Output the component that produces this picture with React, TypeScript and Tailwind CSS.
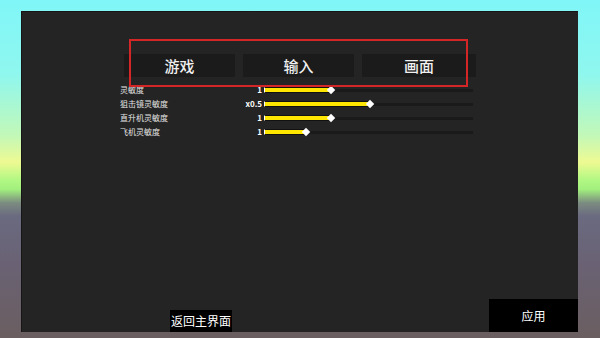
const tabs = [
  { label: '游戏', w: 'w-[111px]' },
  { label: '输入', w: 'w-[111px]' },
  { label: '画面', w: 'w-[114px]' },
]

const sliders = [
  { label: '灵敏度', value: '1', fill: 67 },
  { label: '狙击镜灵敏度', value: 'x0.5', fill: 106 },
  { label: '直升机灵敏度', value: '1', fill: 67 },
  { label: '飞机灵敏度', value: '1', fill: 42 },
]

const font = "font-['Noto_Sans_CJK_SC','Noto_Sans',sans-serif]"

export default function App() {
  return (
    <div
      className={`relative w-[600px] h-[338px] overflow-hidden pt-[11px] pl-[21px] ${font} bg-[linear-gradient(to_bottom,#80f6f8_0%,#8ff7ee_22%,#c2f8b8_40%,#eefa92_48%,#b4f884_53%,#a2f07e_56%,#7c8c80_60%,#6a6a80_64%,#6a6274_78%,#6a5e60_100%)]`}
    >
      {/* Panel */}
      <div className="w-[557px] h-[321px] bg-[#242424] border-l border-t border-[#161616] flex flex-col">
        {/* Tabs */}
        <div className="flex gap-[8px] ml-[102px] mt-[42px]">
          {tabs.map(t => (
            <div
              key={t.label}
              className={`${t.w} h-[23px] bg-[#1b1b1b] flex items-center justify-center text-[15px] font-medium text-[#f0f0f0] leading-none`}
            >
              {t.label}
            </div>
          ))}
        </div>

        {/* Sliders */}
        <div className="flex flex-col mt-[6px] ml-[98px]">
          {sliders.map(s => (
            <div key={s.label} className="flex items-center h-[14px]">
              <span className="w-[110px] text-[8px] text-[#e4e4e4] leading-none">{s.label}</span>
              <span className="w-[33px] text-right text-[8px] font-bold text-white leading-none pr-[1px]">{s.value}</span>
              <div className="relative w-[209px] h-[3px] bg-[#1a1a1a] ml-[1px] flex items-center">
                <div
                  className="h-[6px] bg-[#ffe600] border border-[#111] border-l-white"
                  style={{ width: s.fill }}
                />
                <div
                  className="absolute w-[6px] h-[6px] bg-white rotate-45"
                  style={{ left: s.fill - 3 }}
                />
              </div>
            </div>
          ))}
        </div>

        <div className="flex-1" />

        {/* Bottom buttons */}
        <div className="flex items-end">
          <div className="ml-[148px] w-[62px] h-[22px] bg-black flex items-center justify-center text-[12px] text-white leading-none">
            返回主界面
          </div>
          <div className="ml-auto w-[89px] h-[33px] bg-black flex items-center justify-center text-[12px] text-white leading-none">
            应用
          </div>
        </div>
      </div>

      {/* Red highlight box */}
      <div className="absolute left-[129px] top-[39px] w-[339px] h-[48px] border-2 border-solid border-[color:#d42626]" />
    </div>
  )
}
